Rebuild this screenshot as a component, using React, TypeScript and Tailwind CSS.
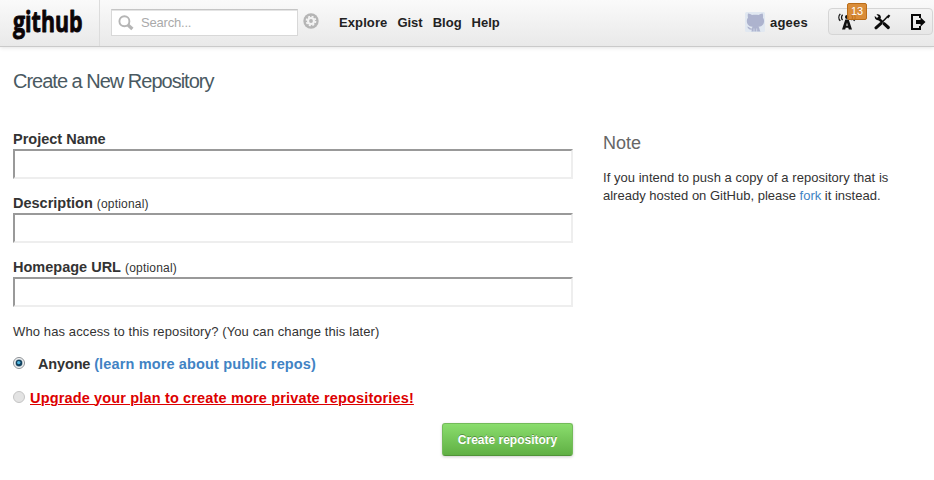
import React from "react";

function Logo() {
  return (
    <svg width="78" height="46" viewBox="0 0 78 46" className="ml-[10px] shrink-0 overflow-visible" aria-label="github">
      <text
        x="3"
        y="31.700"
        textLength="69.500"
        lengthAdjust="spacingAndGlyphs"
        className="fill-[#0b0507] stroke-[#0b0507] font-['Open_Sans',sans-serif] text-[28.5px] font-bold"
        strokeWidth="0.900"
        strokeLinejoin="round"
      >
        github
      </text>
    </svg>
  );
}

function SearchIcon() {
  return (
    <svg width="16" height="16" viewBox="0 0 16 16" className="ml-[6px] shrink-0" fill="none" stroke="#b5b5b5">
      <circle cx="6.4" cy="6.2" r="5" strokeWidth="1.9" />
      <path d="M10 10l4.4 3.9" strokeWidth="3.300" />
    </svg>
  );
}

function GearIcon() {
  return (
    <svg width="16" height="16" viewBox="0 0 16 16" className="ml-[5px] mt-[13px] shrink-0">
      <circle cx="8" cy="8" r="7.700" fill="#b5b5b5" />
      <circle cx="8" cy="8" r="4" fill="#f3f3f3" />
      <circle cx="8" cy="8" r="4.500" fill="none" stroke="#f3f3f3" strokeWidth="1.700" strokeDasharray="2 1.534" />
      <circle cx="8" cy="8" r="1.900" fill="#b5b5b5" />
    </svg>
  );
}

function Octocat() {
  return (
    <svg width="20" height="20" viewBox="0 0 20 20" className="mt-[12px] shrink-0">
      <rect width="20" height="20" rx="1.5" fill="#e1e8f1" />
      <path
        d="M3 1.500c1.200-.1 2.900.7 4 1.500 2-.4 4.600-.4 6.600 0 1.100-.8 2.800-1.600 4-1.500.6 1.400.6 2.900.3 4 1.500 1.900 1.500 4.500.5 6.400-.9 1.700-2.600 2.500-4.900 2.800.6.700.9 1.500 1 2.300.1.900.5 1.700 1 2.500H6.300c.3-.6.5-1.200.5-1.900-2.100.2-3.200-.5-3.700-1.600-.3-.6-.7-.9-1.400-1.200 1.400-.4 2.400.1 3 .9.600.7 1.300.9 2.200.7.100-.7.300-1.200.7-1.700-2.500-.3-4.200-1.100-5.100-2.800-1-1.900-1-4.500.5-6.400-.3-1.100-.4-2.600 0-4z"
        fill="#adb3ce"
      />
      <path d="M9 16.500V20M11.700 16.500V20" stroke="#dbe2ee" strokeWidth=".7" />
    </svg>
  );
}

function BroadcastIcon() {
  return (
    <svg width="18" height="17" viewBox="0 0 18 17" fill="none" stroke="#111" className="shrink-0">
      <path d="M4.600 1.800c-1.400 1.400-1.400 3.800 0 5.200M13.400 1.800c1.400 1.400 1.400 3.800 0 5.200M2.300.9c-1.900 2-1.900 5 0 7M15.700.9c1.900 2 1.900 5 0 7" strokeWidth="1.300" />
      <circle cx="9" cy="4.100" r="2" fill="#111" stroke="none" />
      <path d="M7.300 6.500h3.400L14 16.500h-3.200l-.5-1.800H7.700l-.5 1.800H4zM8.200 12.700h1.600L9 9.500z" fill="#111" stroke="none" fillRule="evenodd" />
    </svg>
  );
}

function ToolsIcon() {
  return (
    <svg width="17" height="16" viewBox="0 0 17 16" fill="none" stroke="#0b0b0b" className="shrink-0">
      <path d="M4.500 4.500l4 3.700" strokeWidth="2.500" />
      <path d="M10 9.600l4.300 3.900" strokeWidth="3.200" strokeLinecap="round" />
      <path d="M.8 1.900l2.200 2 1.600-1.500L2.500.4c2.400-.9 4.900.9 4.300 3.500L4.900 6.200C2.500 6.700.2 4.600.8 1.900z" fill="#0b0b0b" stroke="none" />
      <path d="M2 13.800l4.700-4.200" strokeWidth="3" strokeLinecap="round" />
      <path d="M7.300 9l5.600-5.700" strokeWidth="1.500" />
      <path d="M12.200 2.700L14.800.5l1.500 1.300-2.200 2.600z" fill="#0b0b0b" stroke="none" />
    </svg>
  );
}

function LogoutIcon() {
  return (
    <svg width="15" height="16" viewBox="0 0 15 16" className="shrink-0">
      <path d="M9 4V1H1v14h8v-3" fill="none" stroke="#080808" strokeWidth="2" />
      <path d="M5 6h4.500V3.200L14.500 8l-5 4.800V10H5z" fill="#080808" />
    </svg>
  );
}

function Header() {
  return (
    <header className="flex h-[47px] w-full items-start border-b border-[#cacaca] bg-gradient-to-b from-[#fafafa] to-[#e9e9e9] shadow-[0_1px_4px_rgba(0,0,0,0.11)]">
      <div className="flex h-[46px] w-[100px] shrink-0 border-r border-[#dcdcdc]">
        <Logo />
      </div>
      <div className="ml-[11px] mt-[9px] flex h-[27px] w-[187px] shrink-0 items-center border border-[#d8d8d8] border-t-[#c5c5c5] bg-white shadow-[inset_0_1px_0_#e4e4e4]">
        <SearchIcon />
        <span className="ml-[7px] text-[13px] leading-[25px] tracking-[-0.2px] text-[#aaa]">Search...</span>
      </div>
      <GearIcon />
      <nav className="ml-[20px] mt-[14px] flex shrink-0 gap-[10px] text-[13px] font-bold leading-[17px] text-[#222]">
        <a className="tracking-[0.1px]">Explore</a>
        <a>Gist</a>
        <a>Blog</a>
        <a>Help</a>
      </nav>
      <div className="ml-auto flex shrink-0">
        <Octocat />
        <span className="ml-[5px] mt-[14px] w-[58px] text-[13px] font-bold leading-[17px] tracking-[0.2px] text-[#222]">agees</span>
        <div className="relative mr-px mt-[8px] flex h-[27px] w-[105px] items-center rounded-[4px] border border-[#d5d5d5] bg-gradient-to-b from-[#f3f3f3] to-[#e7e7e7] pl-[9px]">
          <BroadcastIcon />
          <span className="w-[18px]" />
          <ToolsIcon />
          <span className="w-[20px]" />
          <LogoutIcon />
          <span className="absolute left-[18px] top-[-6px] flex h-[17px] w-[20px] items-center justify-center rounded-[2px] border border-[#ba6d18] bg-[#d68124]/90 text-[11px] text-white">
            13
          </span>
        </div>
      </div>
    </header>
  );
}

function Field({ label, optional }: { label: string; optional?: boolean }) {
  return (
    <label className="mb-[15px] block">
      <span className="block h-[19px] whitespace-nowrap text-[14.5px] font-bold leading-[19px] text-[#333]">
        {label}
        {optional && <span className="ml-1 text-[12px] font-normal tracking-[0.2px]">(optional)</span>}
      </span>
      <input className="block h-[30px] w-[560px] border-2 border-b-[#eee] border-l-[#999] border-r-[#eee] border-t-[#999] bg-white outline-none" />
    </label>
  );
}

function Radio({ checked }: { checked?: boolean }) {
  return (
    <svg width="12" height="12" viewBox="0 0 12 12" className="mb-[2px] shrink-0">
      <circle cx="6" cy="6" r="5.500" fill={checked ? "#f7f7f7" : "#e3e3e3"} stroke={checked ? "#8b8f94" : "#c4c4c4"} />
      {checked && (
        <g>
          <circle cx="6" cy="6" r="3.900" fill="#b8c4cb" />
          <circle cx="6" cy="6" r="3.200" fill="#12405e" />
          <circle cx="5.700" cy="5.600" r="1.700" fill="#4fb6e0" />
        </g>
      )}
    </svg>
  );
}

export default function App() {
  return (
    <div className="h-[480px] w-[934px] overflow-hidden bg-white font-['Liberation_Sans',Arial,sans-serif] text-[#333]">
      <Header />
      <main className="pl-[13px]">
        <h1 className="mt-[22px] h-[24px] text-[20px] leading-[24px] tracking-[-1px] text-[#495961]">Create a New Repository</h1>
        <div className="mt-[37px] flex">
          <form className="w-[560px] shrink-0">
            <Field label="Project Name" />
            <Field label="Description" optional />
            <Field label="Homepage URL" optional />
            <p className="mt-[16px] text-[13px] leading-[18px] tracking-[0.115px]">Who has access to this repository? (You can change this later)</p>
            <div className="mt-[13px] flex h-[20px] items-center text-[14.5px] font-bold leading-[20px]">
              <Radio checked />
              <span className="ml-[13px] whitespace-nowrap tracking-[-0.15px]">
                Anyone <a className="tracking-[0.14px] text-[#4183c4]">(learn more about public repos)</a>
              </span>
            </div>
            <div className="mt-[14px] flex h-[20px] items-center text-[14.5px] font-bold leading-[20px]">
              <Radio />
              <a className="ml-[5px] whitespace-nowrap tracking-[0.155px] text-[#d00] underline decoration-[#d00] decoration-1">
                Upgrade your plan to create more private repositories!
              </a>
            </div>
            <button
              type="button"
              className="ml-auto mt-[15px] block h-[33px] w-[131px] rounded-[3px] border border-[#74bb5a] border-b-[#509338] bg-gradient-to-b from-[#8add6d] to-[#60b044] text-[12px] font-bold text-white shadow-[0_1px_3px_rgba(0,0,0,0.2)] [text-shadow:0_-1px_0_rgba(0,0,0,0.3)]"
            >
              Create repository
            </button>
          </form>
          <aside className="ml-[30px] w-[300px]">
            <h2 className="mt-[2px] text-[18px] leading-[22px] text-[#666]">Note</h2>
            <p className="mt-[15px] whitespace-nowrap text-[13px] leading-[18px]">
              <span className="tracking-[0.04px]">If you intend to push a copy of a repository that is</span>
              <br />
              already hosted on GitHub, please <a className="text-[#4183c4]">fork</a> it instead.
            </p>
          </aside>
        </div>
      </main>
    </div>
  );
}
